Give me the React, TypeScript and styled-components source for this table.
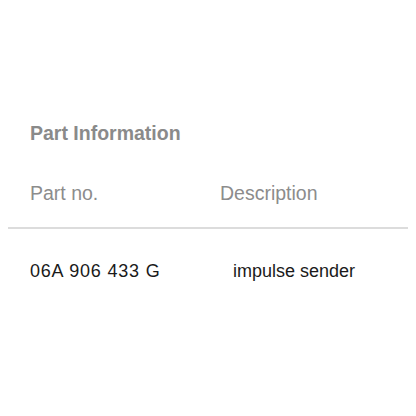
import React from "react";
import styled, { createGlobalStyle } from "styled-components";

const GlobalStyle = createGlobalStyle`
  body {
    margin: 8px;
    background: #ffffff;
    font-family: "Liberation Sans", Arial, sans-serif;
  }
`;

const Section = styled.section`
  padding-top: 109px;
`;

const Title = styled.h2`
  margin: 0;
  padding-left: 22px;
  font-size: 19.5px;
  font-weight: bold;
  color: #8a8a8a;
  line-height: 32px;
`;

const HeaderRow = styled.div`
  display: grid;
  grid-template-columns: 190px 1fr;
  padding: 33px 0 23px 22px;
  border-bottom: 2px solid #dcdcdc;
`;

const HeadCell = styled.span`
  font-size: 19.5px;
  color: #8c8c8c;
  line-height: 22px;
`;

const DataRow = styled.div`
  display: grid;
  grid-template-columns: 203px 1fr;
  padding: 31px 0 0 22px;
`;

const Cell = styled.span<{ $code?: boolean }>`
  font-size: 18px;
  color: #1a1a1a;
  line-height: 22px;
  letter-spacing: ${(p) => (p.$code ? "0.8px" : "0")};
`;

const parts = [{ no: "06A 906 433 G", desc: "impulse sender" }];

export default function App() {
  return (
    <>
      <GlobalStyle />
      <Section>
        <Title>Part Information</Title>
        <HeaderRow>
          <HeadCell>Part no.</HeadCell>
          <HeadCell>Description</HeadCell>
        </HeaderRow>
        {parts.map((p) => (
          <DataRow key={p.no}>
            <Cell $code>{p.no}</Cell>
            <Cell>{p.desc}</Cell>
          </DataRow>
        ))}
      </Section>
    </>
  );
}
